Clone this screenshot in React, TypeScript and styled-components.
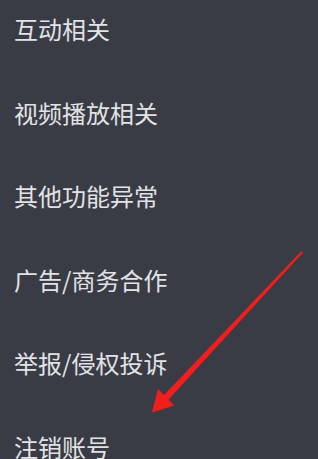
import React from 'react';
import styled, { createGlobalStyle } from 'styled-components';

const GlobalStyle = createGlobalStyle`
  html, body {
    margin: 0;
    padding: 0;
    background: #3a3c45;
  }
`;

const Page = styled.div`
  position: relative;
  width: 318px;
  height: 459px;
  overflow: hidden;
  background: #3a3c45;
  font-family: 'Noto Sans CJK SC', 'Noto Sans', sans-serif;
`;

const Menu = styled.ul`
  list-style: none;
  margin: 0;
  padding: 17px 0 0 14px;
  display: flex;
  flex-direction: column;
  gap: 59.6px;
`;

const MenuItem = styled.li`
  font-size: 24px;
  line-height: 24px;
  height: 24px;
  color: #e2e3e6;
  white-space: nowrap;
`;

const Arrow = styled.svg`
  position: absolute;
  left: 0;
  top: 0;
  pointer-events: none;
`;

const items = ['互动相关', '视频播放相关', '其他功能异常', '广告/商务合作', '举报/侵权投诉', '注销账号'];

const App = () => (
  <>
    <GlobalStyle />
    <Page>
      <Menu>
        {items.map(label => (
          <MenuItem key={label}>{label}</MenuItem>
        ))}
      </Menu>
      <Arrow width="318" height="459" viewBox="0 0 318 459">
        <polygon
          points="303,252.5 168.5,399.5 174,405.5 152,412.5 158,389 164,395 301.5,251"
          fill="#f21d1d"
        />
      </Arrow>
    </Page>
  </>
);

export default App;
